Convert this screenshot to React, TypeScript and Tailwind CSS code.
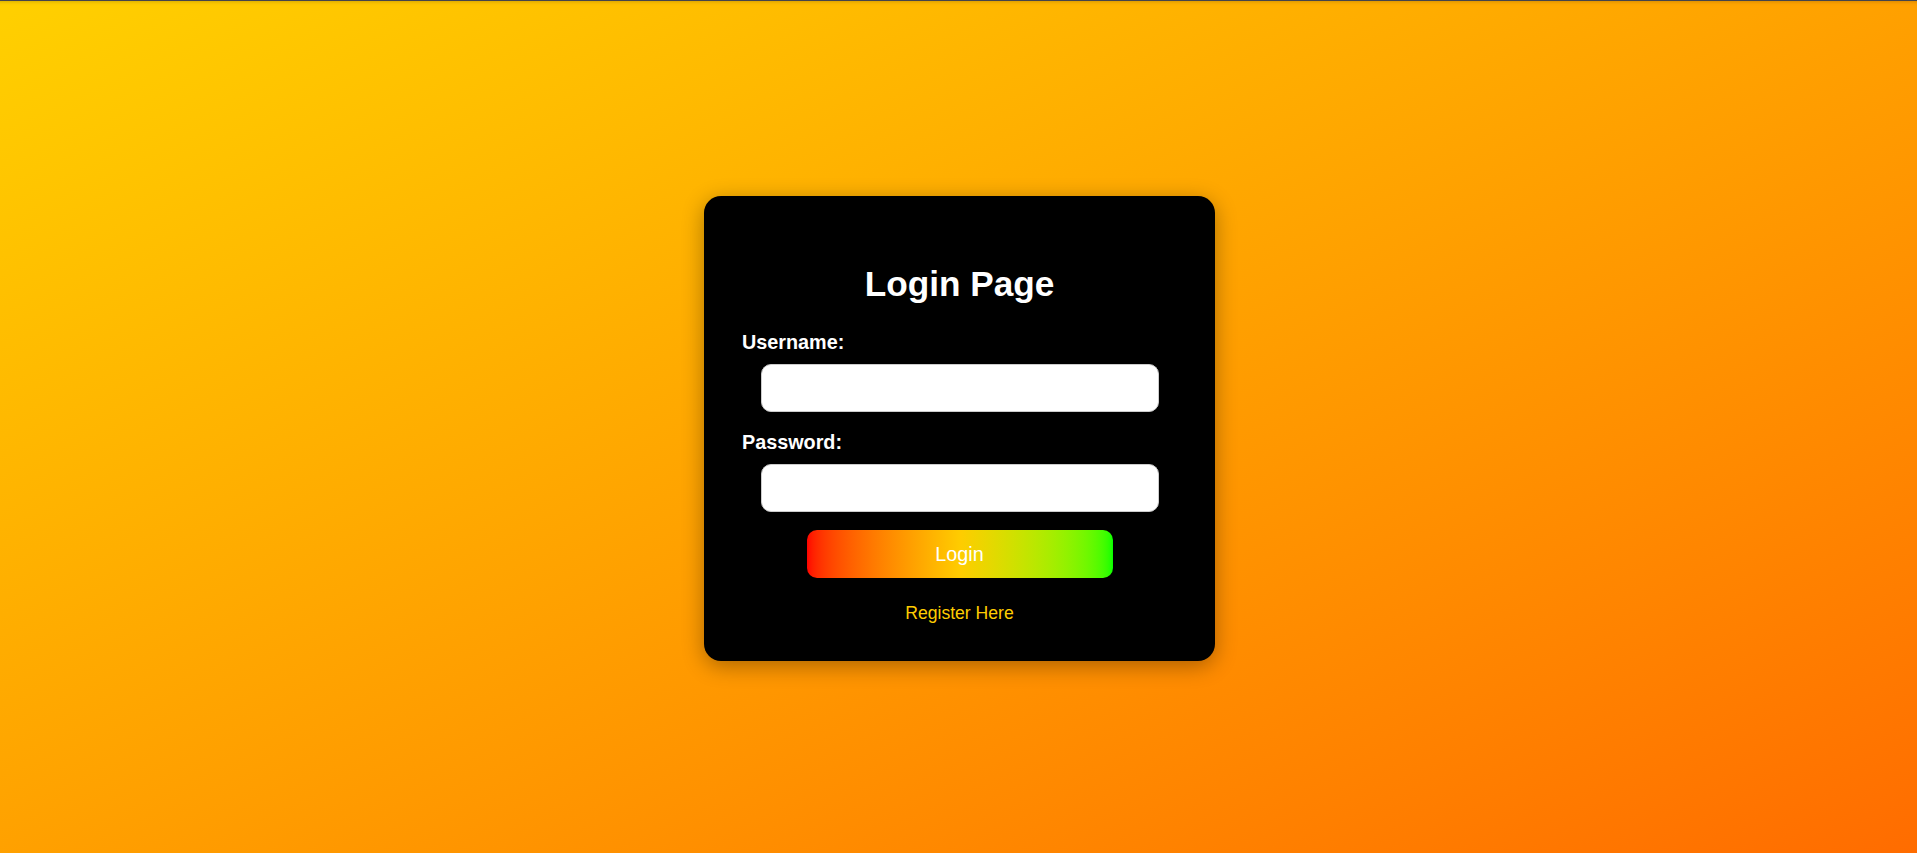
import { useState } from 'react'

export default function App() {
  const [username, setUsername] = useState('')
  const [password, setPassword] = useState('')

  return (
    <div className="flex h-[853px] w-full justify-center bg-gradient-to-br from-[#ffd000] to-[#ff6c00] pl-[2px] pt-[196px] font-['Liberation_Sans',Arial,sans-serif] shadow-[inset_0_1px_0_#44444c,inset_0_6px_4px_-5px_rgba(0,0,0,0.25)]">
      <form
        onSubmit={(e) => e.preventDefault()}
        className="h-fit w-[511px] rounded-[17px] bg-black px-[36px] pb-[38px] pt-[68px] shadow-[0_5px_22px_rgba(0,0,0,0.33)]"
      >
        <h1 className="text-center text-[35.2px] font-bold leading-[40px] text-white">Login Page</h1>

        <label htmlFor="username" className="mt-[27px] block pl-[2px] text-[19.8px] font-bold leading-[23px] text-white">
          Username:
        </label>
        <input
          id="username"
          type="text"
          value={username}
          onChange={(e) => setUsername(e.target.value)}
          className="mx-auto mt-[10px] block h-[48px] w-[398px] rounded-[10px] border border-[#cccccc] bg-white px-3 text-[17.6px] text-black outline-none"
        />

        <label htmlFor="password" className="mt-[19px] block pl-[2px] text-[19.8px] font-bold leading-[23px] text-white">
          Password:
        </label>
        <input
          id="password"
          type="password"
          value={password}
          onChange={(e) => setPassword(e.target.value)}
          className="mx-auto mt-[10px] block h-[48px] w-[398px] rounded-[10px] border border-[#cccccc] bg-white px-3 text-[17.6px] text-black outline-none"
        />

        <button
          type="submit"
          className="mx-auto mt-[18px] block h-[48px] w-[306px] rounded-[10px] bg-gradient-to-r from-[#ff0000] via-[#ffcc00] to-[#00ff00] text-[19.8px] leading-[23px] text-white"
        >
          Login
        </button>

        <p className="mt-[25px] text-center text-[17.6px] leading-[20px]">
          <a href="#" className="text-[#ffcc00]">
            Register Here
          </a>
        </p>
      </form>
    </div>
  )
}
